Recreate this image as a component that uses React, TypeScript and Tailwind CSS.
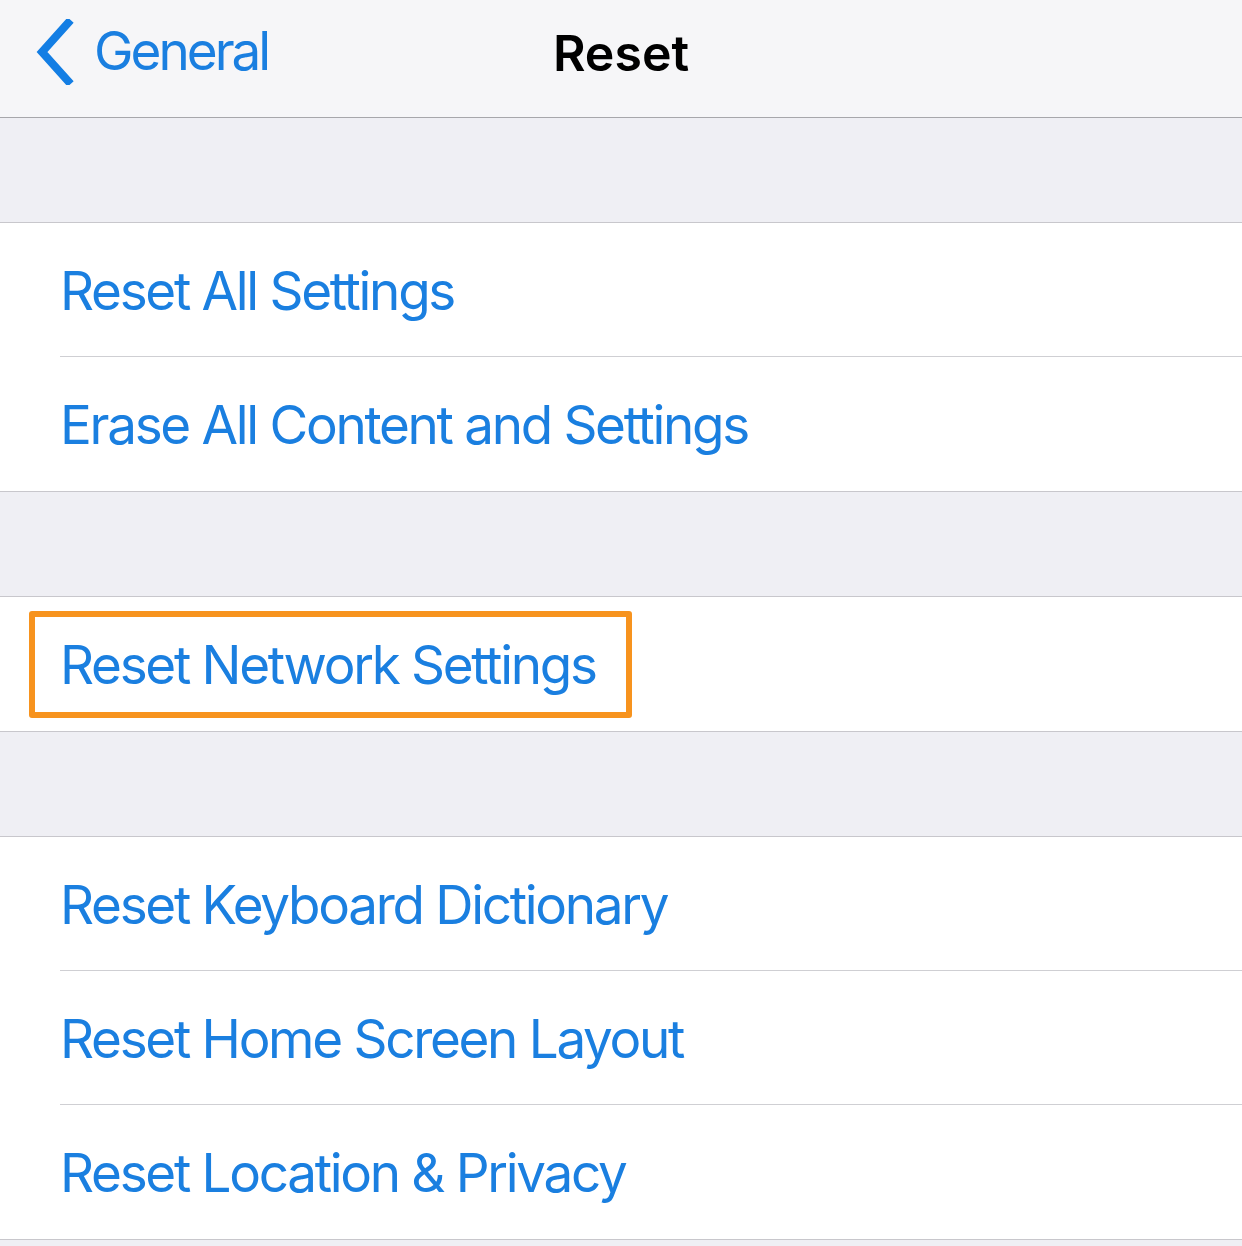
const Chevron = () => (
  <svg width="40" height="66" viewBox="0 0 40 66" className="shrink-0">
    <path d="M33 4 L7 33 L33 62" fill="none" stroke="#137ee4" strokeWidth="8" strokeLinecap="square" />
  </svg>
);

const Row = ({ label, last }: { label: string; last?: boolean }) => (
  <div className="pl-[60px] bg-white">
    <div
      className={
        "h-[134px] flex items-center pt-[3px] text-[53px] text-[#1a7fe0] tracking-[-2.3px] " +
        (last ? "" : "border-b border-[#cfcfd3]")
      }
    >
      <span className="leading-none">{label}</span>
    </div>
  </div>
);

const Group = ({ items }: { items: string[] }) => (
  <div className="border-y border-[#c8c7cc] bg-white">
    {items.map((it, i) => (
      <Row key={it} label={it} last={i === items.length - 1} />
    ))}
  </div>
);

export default function App() {
  return (
    <div
      className="w-[1242px] h-[1246px] bg-[#efeff4] overflow-hidden relative"
      style={{ fontFamily: "Inter, 'Noto Sans', sans-serif" }}
    >
      {/* Navigation bar */}
      <div className="h-[118px] bg-[#f6f6f8] border-b border-[#a7a7ab] relative flex items-center">
        <div className="flex items-center pl-[35px] gap-[19px] -mt-[14px]">
          <Chevron />
          <span className="text-[53px] text-[#1a7fe0] leading-none tracking-[-3px]">General</span>
        </div>
        <div className="absolute inset-0 flex items-center justify-center -mt-[12px]">
          <span className="text-[50px] font-semibold text-black leading-none">Reset</span>
        </div>
      </div>

      <div className="h-[104px]" />
      <Group items={["Reset All Settings", "Erase All Content and Settings"]} />
      <div className="h-[104px]" />
      <div className="relative">
        <Group items={["Reset Network Settings"]} />
        {/* highlight box */}
        <div className="absolute left-[29px] top-[15px] w-[603px] h-[107px] border-[6px] border-[#f7931e] rounded-[3px]" />
      </div>
      <div className="h-[104px]" />
      <Group
        items={[
          "Reset Keyboard Dictionary",
          "Reset Home Screen Layout",
          "Reset Location & Privacy",
        ]}
      />
    </div>
  );
}
